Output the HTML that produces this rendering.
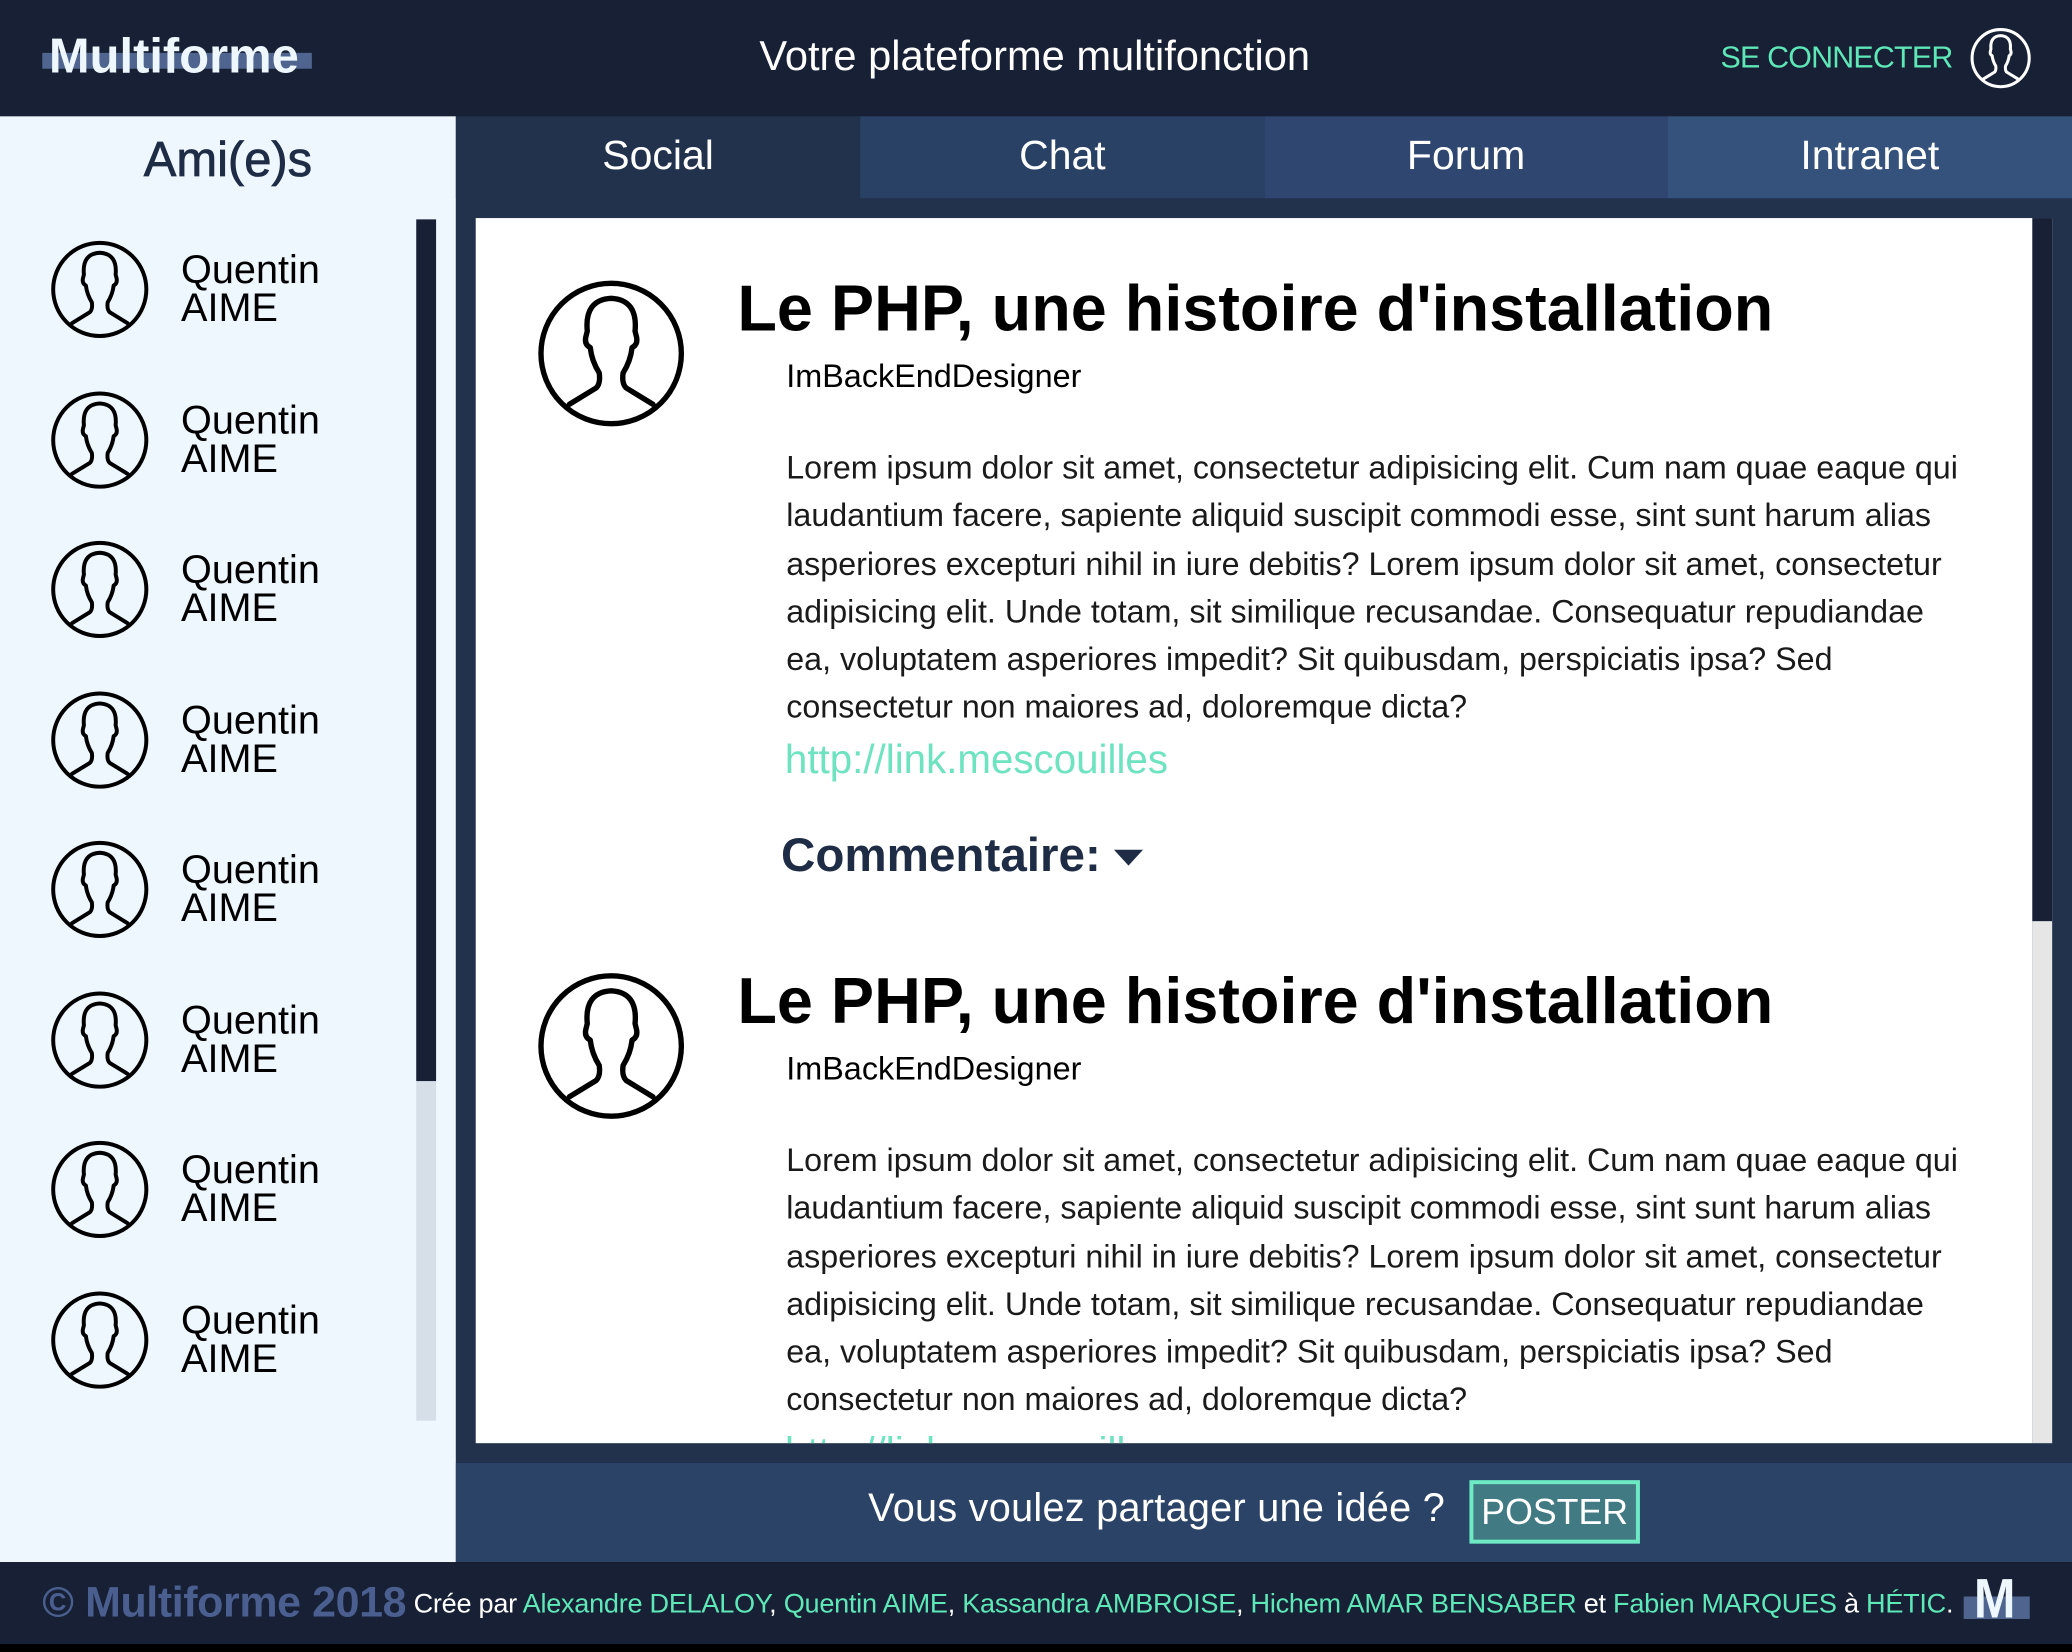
<!DOCTYPE html>
<html><head><meta charset="utf-8"><style>
*{margin:0;padding:0;box-sizing:border-box}
html,body{width:2072px;height:1652px;overflow:hidden;background:#000;font-family:"Liberation Sans",sans-serif}
#w{position:absolute;left:0;top:0;width:1568px;height:1250px;transform:scale(1.32143,1.3216);transform-origin:0 0;background:#000}
.a{position:absolute}
.t{white-space:nowrap}
svg.av{position:absolute;overflow:visible}
.fr{position:absolute;left:137px;font-size:30px;line-height:29px;color:#000}
.tab{position:absolute;top:88px;height:62px;width:306px;color:#fff;font-size:31px;text-align:center;line-height:60px}
.title{position:absolute;left:558px;font-size:49px;font-weight:bold;color:#000}
.auth{position:absolute;left:595px;font-size:24.5px;color:#000}
.p{position:absolute;left:595px;font-size:24.4px;line-height:36.3px;color:#1a1a1a;white-space:nowrap}
.lnk{position:absolute;left:594px;font-size:30.5px;color:#6de3c0}
.com{position:absolute;left:591px;font-size:36px;font-weight:bold;color:#1e2c45}
.g{color:#5ee8b8}
</style></head><body><div id="w">
<svg width="0" height="0" style="position:absolute"><defs><g id="ic" fill="none" stroke-linejoin="round" stroke-linecap="round"><circle cx="50" cy="50" r="47"/><path d="M22 84 L40 73 Q43 70 42 63 Q37 55 36 46 Q32 44 33 39 L34 35 Q32 14 50 13 Q68 14 66 35 L67 39 Q68 44 64 46 Q63 55 58 63 Q57 70 60 73 L78 84"/></g></defs></svg>

<div class="a" style="left:0;top:0;width:1568px;height:88px;background:#172034"></div>
<div class="a" style="left:32px;top:40px;width:204px;height:12px;background:#4f6590"></div>
<div class="a t" style="left:37px;top:22px;font-size:37px;font-weight:bold;color:#eef6fe">Multiforme</div>
<div class="a t" style="left:0;width:1568px;text-align:center;top:24px;font-size:31.5px;color:#fff;padding-right:2px">Votre plateforme multifonction</div>
<div class="a t" style="left:1302px;top:30px;font-size:23px;color:#5ee8b8;letter-spacing:-0.6px">SE CONNECTER</div>
<svg class="av" style="left:1491px;top:21px" width="46" height="46" viewBox="0 0 100 100"><use href="#ic" stroke="#fff" stroke-width="5"/></svg>

<div class="a" style="left:0;top:88px;width:345px;height:1094px;background:#eef6fe"></div>
<div class="a t" style="left:0;width:345px;text-align:center;top:100px;font-size:37px;color:#1e2c45;-webkit-text-stroke:0.6px #1e2c45">Ami(e)s</div>
<div class="a" style="left:315px;top:166px;width:15px;height:909px;background:#d6dfe8"></div>
<div class="a" style="left:315px;top:166px;width:15px;height:652px;background:#172034"></div>

<div class="a" style="left:345px;top:88px;width:1223px;height:1094px;background:#22324d"></div>
<div class="tab" style="left:345px;background:#22324d">Social</div>
<div class="tab" style="left:651px;background:#2a4166">Chat</div>
<div class="tab" style="left:957px;width:305px;background:#2e4670">Forum</div>
<div class="tab" style="left:1262px;background:#34527c">Intranet</div>

<div class="a" style="left:360px;top:165px;width:1178px;height:927px;background:#fff"></div>
<div class="a" style="left:1538px;top:165px;width:15px;height:927px;background:#e6e6e6"></div>
<div class="a" style="left:1538px;top:165px;width:15px;height:532px;background:#172034"></div>

<div class="a" style="left:345px;top:1107px;width:1223px;height:75px;background:#2b4366"></div>
<div class="a t" style="left:657px;top:1125px;font-size:30px;color:#fff;letter-spacing:0.2px">Vous voulez partager une idée ?</div>
<div class="a" style="left:1112px;top:1120px;width:129px;height:48px;background:#417a82;border:3px solid #6de9c3;color:#fff;font-size:27px;text-align:center;line-height:42px">POSTER</div>

<div class="a" style="left:0;top:1182px;width:1568px;height:62px;background:#172034"></div>
<div class="a t" style="left:32px;top:1194px;font-size:32.5px;font-weight:bold;color:#4a5f8f;letter-spacing:-0.3px">© Multiforme 2018</div>
<div class="a t" style="left:313px;top:1202px;font-size:20.5px;color:#fff;letter-spacing:-0.2px">Crée par <span class="g">Alexandre DELALOY</span>, <span class="g">Quentin AIME</span>, <span class="g">Kassandra AMBROISE</span>, <span class="g">Hichem AMAR BENSABER</span> et <span class="g">Fabien MARQUES</span> à <span class="g">HÉTIC</span>.</div>
<div class="a" style="left:1486px;top:1208px;width:50px;height:17px;background:#4f6590"></div>
<div class="a t" style="left:1492px;top:1186px;font-size:42px;font-weight:bold;color:#eef6fe;transform:scaleX(0.9)">M</div>

<svg class="av" style="left:38px;top:181px" width="75" height="76" viewBox="0 0 100 100"><use href="#ic" stroke="#000" stroke-width="4"/></svg><div class="fr" style="top:190px">Quentin<br>AIME</div>
<svg class="av" style="left:38px;top:295px" width="75" height="76" viewBox="0 0 100 100"><use href="#ic" stroke="#000" stroke-width="4"/></svg><div class="fr" style="top:304px">Quentin<br>AIME</div>
<svg class="av" style="left:38px;top:408px" width="75" height="76" viewBox="0 0 100 100"><use href="#ic" stroke="#000" stroke-width="4"/></svg><div class="fr" style="top:417px">Quentin<br>AIME</div>
<svg class="av" style="left:38px;top:522px" width="75" height="76" viewBox="0 0 100 100"><use href="#ic" stroke="#000" stroke-width="4"/></svg><div class="fr" style="top:531px">Quentin<br>AIME</div>
<svg class="av" style="left:38px;top:635px" width="75" height="76" viewBox="0 0 100 100"><use href="#ic" stroke="#000" stroke-width="4"/></svg><div class="fr" style="top:644px">Quentin<br>AIME</div>
<svg class="av" style="left:38px;top:749px" width="75" height="76" viewBox="0 0 100 100"><use href="#ic" stroke="#000" stroke-width="4"/></svg><div class="fr" style="top:758px">Quentin<br>AIME</div>
<svg class="av" style="left:38px;top:862px" width="75" height="76" viewBox="0 0 100 100"><use href="#ic" stroke="#000" stroke-width="4"/></svg><div class="fr" style="top:871px">Quentin<br>AIME</div>
<svg class="av" style="left:38px;top:976px" width="75" height="76" viewBox="0 0 100 100"><use href="#ic" stroke="#000" stroke-width="4"/></svg><div class="fr" style="top:985px">Quentin<br>AIME</div>

<div class="a" style="left:360px;top:165px;width:1178px;height:927px;overflow:hidden">
 <div class="a" style="left:-360px;top:-165px;width:1568px;height:1300px">
  <svg class="av" style="left:406px;top:211px" width="113" height="113" viewBox="0 0 100 100"><use href="#ic" stroke="#000" stroke-width="3.6"/></svg>
  <div class="title t" style="top:206px">Le PHP, une histoire d'installation</div>
  <div class="auth t" style="top:272px">ImBackEndDesigner</div>
  <div class="p" style="top:337px">Lorem ipsum dolor sit amet, consectetur adipisicing elit. Cum nam quae eaque qui<br>laudantium facere, sapiente aliquid suscipit commodi esse, sint sunt harum alias<br>asperiores excepturi nihil in iure debitis? Lorem ipsum dolor sit amet, consectetur<br>adipisicing elit. Unde totam, sit similique recusandae. Consequatur repudiandae<br>ea, voluptatem asperiores impedit? Sit quibusdam, perspiciatis ipsa? Sed<br>consectetur non maiores ad, doloremque dicta?</div>
  <div class="lnk t" style="top:558px">http://link.mescouilles</div>
  <div class="com t" style="top:626px">Commentaire: <span style="display:inline-block;width:0;height:0;border-left:11px solid transparent;border-right:11px solid transparent;border-top:12px solid #1e2c45;vertical-align:middle"></span></div>

  <svg class="av" style="left:406px;top:735px" width="113" height="113" viewBox="0 0 100 100"><use href="#ic" stroke="#000" stroke-width="3.6"/></svg>
  <div class="title t" style="top:730px">Le PHP, une histoire d'installation</div>
  <div class="auth t" style="top:796px">ImBackEndDesigner</div>
  <div class="p" style="top:861px">Lorem ipsum dolor sit amet, consectetur adipisicing elit. Cum nam quae eaque qui<br>laudantium facere, sapiente aliquid suscipit commodi esse, sint sunt harum alias<br>asperiores excepturi nihil in iure debitis? Lorem ipsum dolor sit amet, consectetur<br>adipisicing elit. Unde totam, sit similique recusandae. Consequatur repudiandae<br>ea, voluptatem asperiores impedit? Sit quibusdam, perspiciatis ipsa? Sed<br>consectetur non maiores ad, doloremque dicta?</div>
  <div class="lnk t" style="top:1082px">http://link.mescouilles</div>
 </div>
</div>
</div></body></html>
